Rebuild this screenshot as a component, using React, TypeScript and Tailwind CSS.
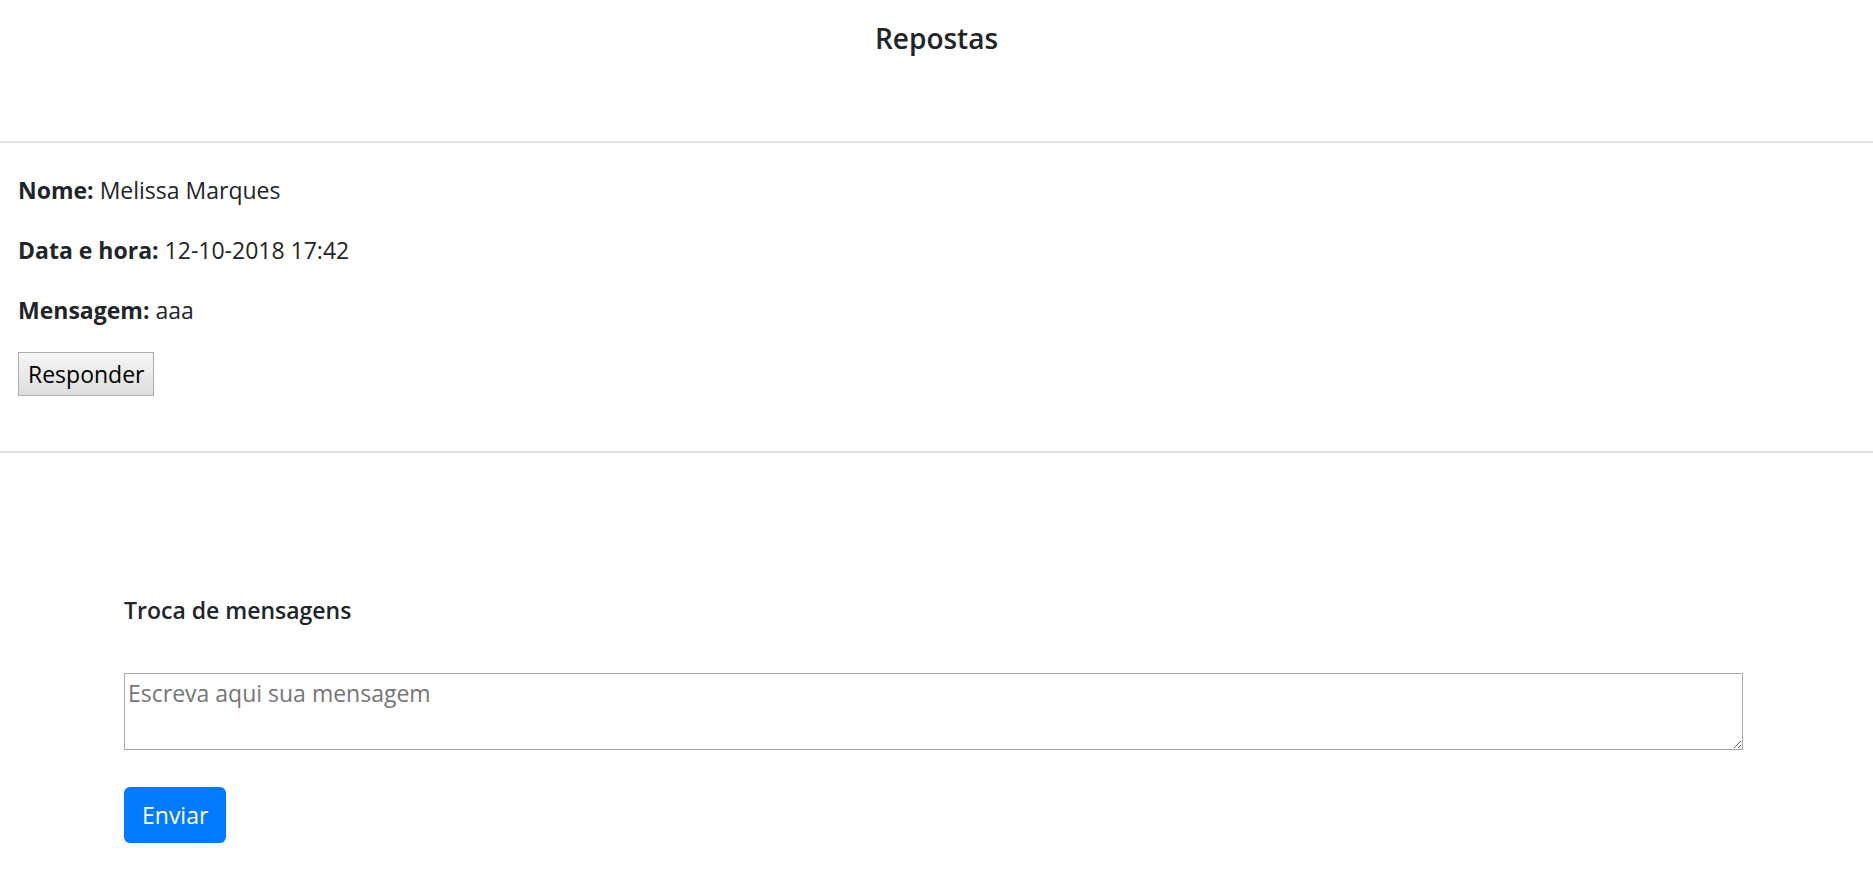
import React from "react";

const Field = ({ label, value }: { label: string; value: string }) => (
  <p className="mb-6 leading-[36px]">
    <b className="font-bold">{label}</b> {value}
  </p>
);

export default function App() {
  return (
    <div className="min-h-screen bg-white text-[#212529] text-[23px] font-['Open_Sans',sans-serif]">
      <header className="pt-[20px] pb-[85px] text-center">
        <h5 className="text-[28px] leading-[36px] font-semibold">Repostas</h5>
      </header>

      <div className="h-[2px] bg-[#e0e0e0]" />

      <section className="px-[18px] pt-[29px] pb-[55px]">
        <Field label="Nome:" value="Melissa Marques" />
        <Field label="Data e hora:" value="12-10-2018 17:42" />
        <Field label="Mensagem:" value="aaa" />
        <button className="h-[44px] px-[9px] border border-[#adadad] bg-gradient-to-b from-[#f6f6f6] to-[#dddddd] text-black leading-none">
          Responder
        </button>
      </section>

      <div className="h-[2px] bg-[#e0e0e0]" />

      <section className="pl-[124px] pr-[130px] pt-[139px]">
        <h6 className="text-[23px] leading-[36px] font-semibold">Troca de mensagens</h6>
        <textarea
          placeholder="Escreva aqui sua mensagem"
          className="mt-[45px] block w-full h-[77px] border border-[#a9a9a9] px-[3px] pt-[4px] pb-[2px] leading-[30px] placeholder:text-[#757575] outline-none resize-y"
        />
        <button className="mt-[37px] h-[56px] px-[18px] rounded-[6px] bg-[#007bff] text-white leading-[36px]">
          Enviar
        </button>
      </section>
    </div>
  );
}
